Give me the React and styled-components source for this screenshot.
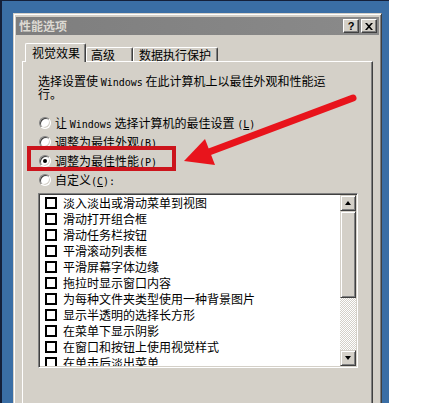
import React from 'react';
import styled, { createGlobalStyle } from 'styled-components';

const Global = createGlobalStyle`
  html, body { margin: 0; padding: 0; background: #fff; }
  body { font-family: "Noto Sans CJK SC", "Liberation Sans", sans-serif; font-size: 12px; color: #000; }
  * { box-sizing: border-box; }
`;

const Page = styled.div`
  position: relative;
  width: 429px;
  height: 403px;
  overflow: hidden;
  background: #fff;
`;

const Desktop = styled.div`
  width: 389px;
  height: 403px;
  background: #3a6ea5;
  border-left: 2px solid #14203a;
  border-top: 1px solid #14203a;
  padding: 12px 7px 0 11px;
  overflow: hidden;
`;

const Dialog = styled.div`
  width: 369px;
  height: 400px;
  background: #d4d0c8;
  border: 1px solid;
  border-color: #d4d0c8 #404040 #404040 #d4d0c8;
  box-shadow: inset 1px 1px #fff, inset -1px -1px #808080;
  padding: 3px 2px 2px 2px;
`;

const TitleBar = styled.div`
  height: 18px;
  display: flex;
  align-items: center;
  padding: 0 2px 0 3px;
  background: linear-gradient(90deg, #7e7e7e, #8a8a8a);
`;

const Title = styled.div`
  flex: 1;
  color: #dcd9d2;
  font-weight: bold;
  font-size: 12px;
  line-height: 18px;
`;

const CaptionButtons = styled.div`
  display: flex;
  gap: 2px;
`;

const CapButton = styled.div`
  width: 16px;
  height: 14px;
  background: #d4d0c8;
  border: 1px solid;
  border-color: #fff #404040 #404040 #fff;
  box-shadow: inset -1px -1px #808080;
  display: flex;
  align-items: center;
  justify-content: center;
  font-family: "Liberation Sans", sans-serif;
  font-weight: bold;
  font-size: 11px;
  line-height: 1;
  color: #000;
`;

const Body = styled.div`
  padding: 8px 6px 0 6px;
`;

const TabStrip = styled.div`
  display: flex;
  align-items: flex-end;
  height: 18px;
  padding-left: 3px;
  position: relative;
  z-index: 2;
`;

const Tab = styled.div`
  width: ${p => p.$w}px;
  height: ${p => (p.$active ? 19 : 14)}px;
  margin-bottom: ${p => (p.$active ? -1 : 0)}px;
  background: #d4d0c8;
  border-top: 1px solid #fff;
  border-left: 1px solid #fff;
  border-right: 1px solid #404040;
  box-shadow: inset -1px 0 #808080;
  border-radius: 2px 2px 0 0;
  display: flex;
  align-items: center;
  padding-left: ${p => p.$pad}px;
  padding-bottom: ${p => (p.$active ? 1 : 0)}px;
  font-size: 12px;
  white-space: nowrap;
`;

const Panel = styled.div`
  height: 360px;
  background: #d4d0c8;
  border: 1px solid;
  border-color: #fff #404040 #404040 #fff;
  box-shadow: inset -1px -1px #808080;
  padding: 13px 14px 0 15px;
`;

const Para = styled.p`
  margin: 0;
  max-width: 300px;
  line-height: 12px;
  font-size: 12px;
`;

const Latin = styled.span`
  font-family: "DejaVu Sans Mono", monospace;
  font-size: 10px;
  line-height: 1;
`;

const RadioGroup = styled.div`
  margin-top: 13px;
  display: flex;
  flex-direction: column;
`;

const RadioRow = styled.div`
  height: 19px;
  display: flex;
  align-items: center;
  gap: 4px;
  padding-left: 1px;
  white-space: nowrap;
  line-height: 14px;
`;

const RadioCircle = styled.span`
  width: 12px;
  height: 12px;
  flex: none;
  border-radius: 50%;
  background: #fff;
  border: 1px solid;
  border-color: #808080 #fff #fff #808080;
  box-shadow: inset 1px 1px #404040, inset -1px -1px #d4d0c8;
  display: flex;
  align-items: center;
  justify-content: center;
  &::after {
    content: '';
    width: 4px;
    height: 4px;
    border-radius: 50%;
    background: ${p => (p.$checked ? '#000' : 'transparent')};
  }
`;

const ListBox = styled.div`
  margin-top: 4px;
  width: 320px;
  height: 175px;
  background: #fff;
  border: 1px solid;
  border-color: #808080 #fff #fff #808080;
  box-shadow: inset 1px 1px #404040, inset -1px -1px #d4d0c8;
  padding: 1px;
  display: flex;
`;

const List = styled.div`
  flex: 1;
  overflow: hidden;
`;

const Item = styled.div`
  height: 16px;
  display: flex;
  align-items: center;
  gap: 6px;
  padding-left: 5px;
  white-space: nowrap;
  font-size: 12px;
  line-height: 14px;
`;

const Check = styled.span`
  width: 12px;
  height: 12px;
  flex: none;
  border: 2px solid #000;
  background: #fff;
`;

const ScrollBar = styled.div`
  width: 16px;
  display: flex;
  flex-direction: column;
`;

const Raised = styled.div`
  background: #d4d0c8;
  border: 1px solid;
  border-color: #d4d0c8 #404040 #404040 #d4d0c8;
  box-shadow: inset 1px 1px #fff, inset -1px -1px #808080;
`;

const ScrollBtn = styled(Raised)`
  height: 16px;
  flex: none;
  display: flex;
  align-items: center;
  justify-content: center;
  &::after {
    content: '';
    width: 0;
    height: 0;
    border-left: 3.5px solid transparent;
    border-right: 3.5px solid transparent;
    ${p => (p.$down ? 'border-top: 4px solid #000;' : 'border-bottom: 4px solid #000;')}
  }
`;

const Thumb = styled(Raised)`
  height: 87px;
  flex: none;
`;

const Track = styled.div`
  flex: 1;
  background-image: conic-gradient(#d4d0c8 25%, #fff 0 50%, #d4d0c8 0 75%, #fff 0);
  background-size: 2px 2px;
`;

const Annotation = styled.svg`
  position: absolute;
  left: 0;
  top: 0;
  pointer-events: none;
`;

const radios = [
  { label: <>让 <Latin>Windows</Latin> 选择计算机的最佳设置 <Latin>(<u>L</u>)</Latin></>, checked: false },
  { label: <>调整为最佳外观<Latin>(<u>B</u>)</Latin></>, checked: false },
  { label: <>调整为最佳性能<Latin>(<u>P</u>)</Latin></>, checked: true },
  { label: <>自定义<Latin>(<u>C</u>):</Latin></>, checked: false },
];

const items = [
  '淡入淡出或滑动菜单到视图',
  '滑动打开组合框',
  '滑动任务栏按钮',
  '平滑滚动列表框',
  '平滑屏幕字体边缘',
  '拖拉时显示窗口内容',
  '为每种文件夹类型使用一种背景图片',
  '显示半透明的选择长方形',
  '在菜单下显示阴影',
  '在窗口和按钮上使用视觉样式',
  '在单击后淡出菜单',
];

export default function App() {
  return (
    <Page>
      <Global />
      <Desktop>
        <Dialog>
          <TitleBar>
            <Title>性能选项</Title>
            <CaptionButtons>
              <CapButton>?</CapButton>
              <CapButton>
                <svg width="8" height="7" viewBox="0 0 8 7">
                  <path d="M0 0h2l2 2.2L6 0h2L5 3.5 8 7H6L4 4.8 2 7H0l3-3.5z" fill="#000" />
                </svg>
              </CapButton>
            </CaptionButtons>
          </TitleBar>
          <Body>
            <TabStrip>
              <Tab $active $w={61} $pad={6}>视觉效果</Tab>
              <Tab $w={47} $pad={4}>高级</Tab>
              <Tab $w={85} $pad={5}>数据执行保护</Tab>
            </TabStrip>
            <Panel>
              <Para>
                选择设置使 <Latin>Windows</Latin> 在此计算机上以最佳外观和性能运行。
              </Para>
              <RadioGroup>
                {radios.map((r, i) => (
                  <RadioRow key={i}>
                    <RadioCircle $checked={r.checked} />
                    <span>{r.label}</span>
                  </RadioRow>
                ))}
              </RadioGroup>
              <ListBox>
                <List>
                  {items.map(t => (
                    <Item key={t}>
                      <Check />
                      <span>{t}</span>
                    </Item>
                  ))}
                </List>
                <ScrollBar>
                  <ScrollBtn />
                  <Thumb />
                  <Track />
                  <ScrollBtn $down />
                </ScrollBar>
              </ListBox>
            </Panel>
          </Body>
        </Dialog>
      </Desktop>
      <Annotation width="429" height="403" viewBox="0 0 429 403">
        <rect x="29" y="148" width="145" height="21" fill="none" stroke="#cc141c" strokeWidth="4" />
        <line x1="353" y1="98" x2="209" y2="152" stroke="#e8141c" strokeWidth="7" strokeLinecap="round" />
        <polygon points="184,161 205,139 215,165" fill="#e8141c" />
      </Annotation>
    </Page>
  );
}
